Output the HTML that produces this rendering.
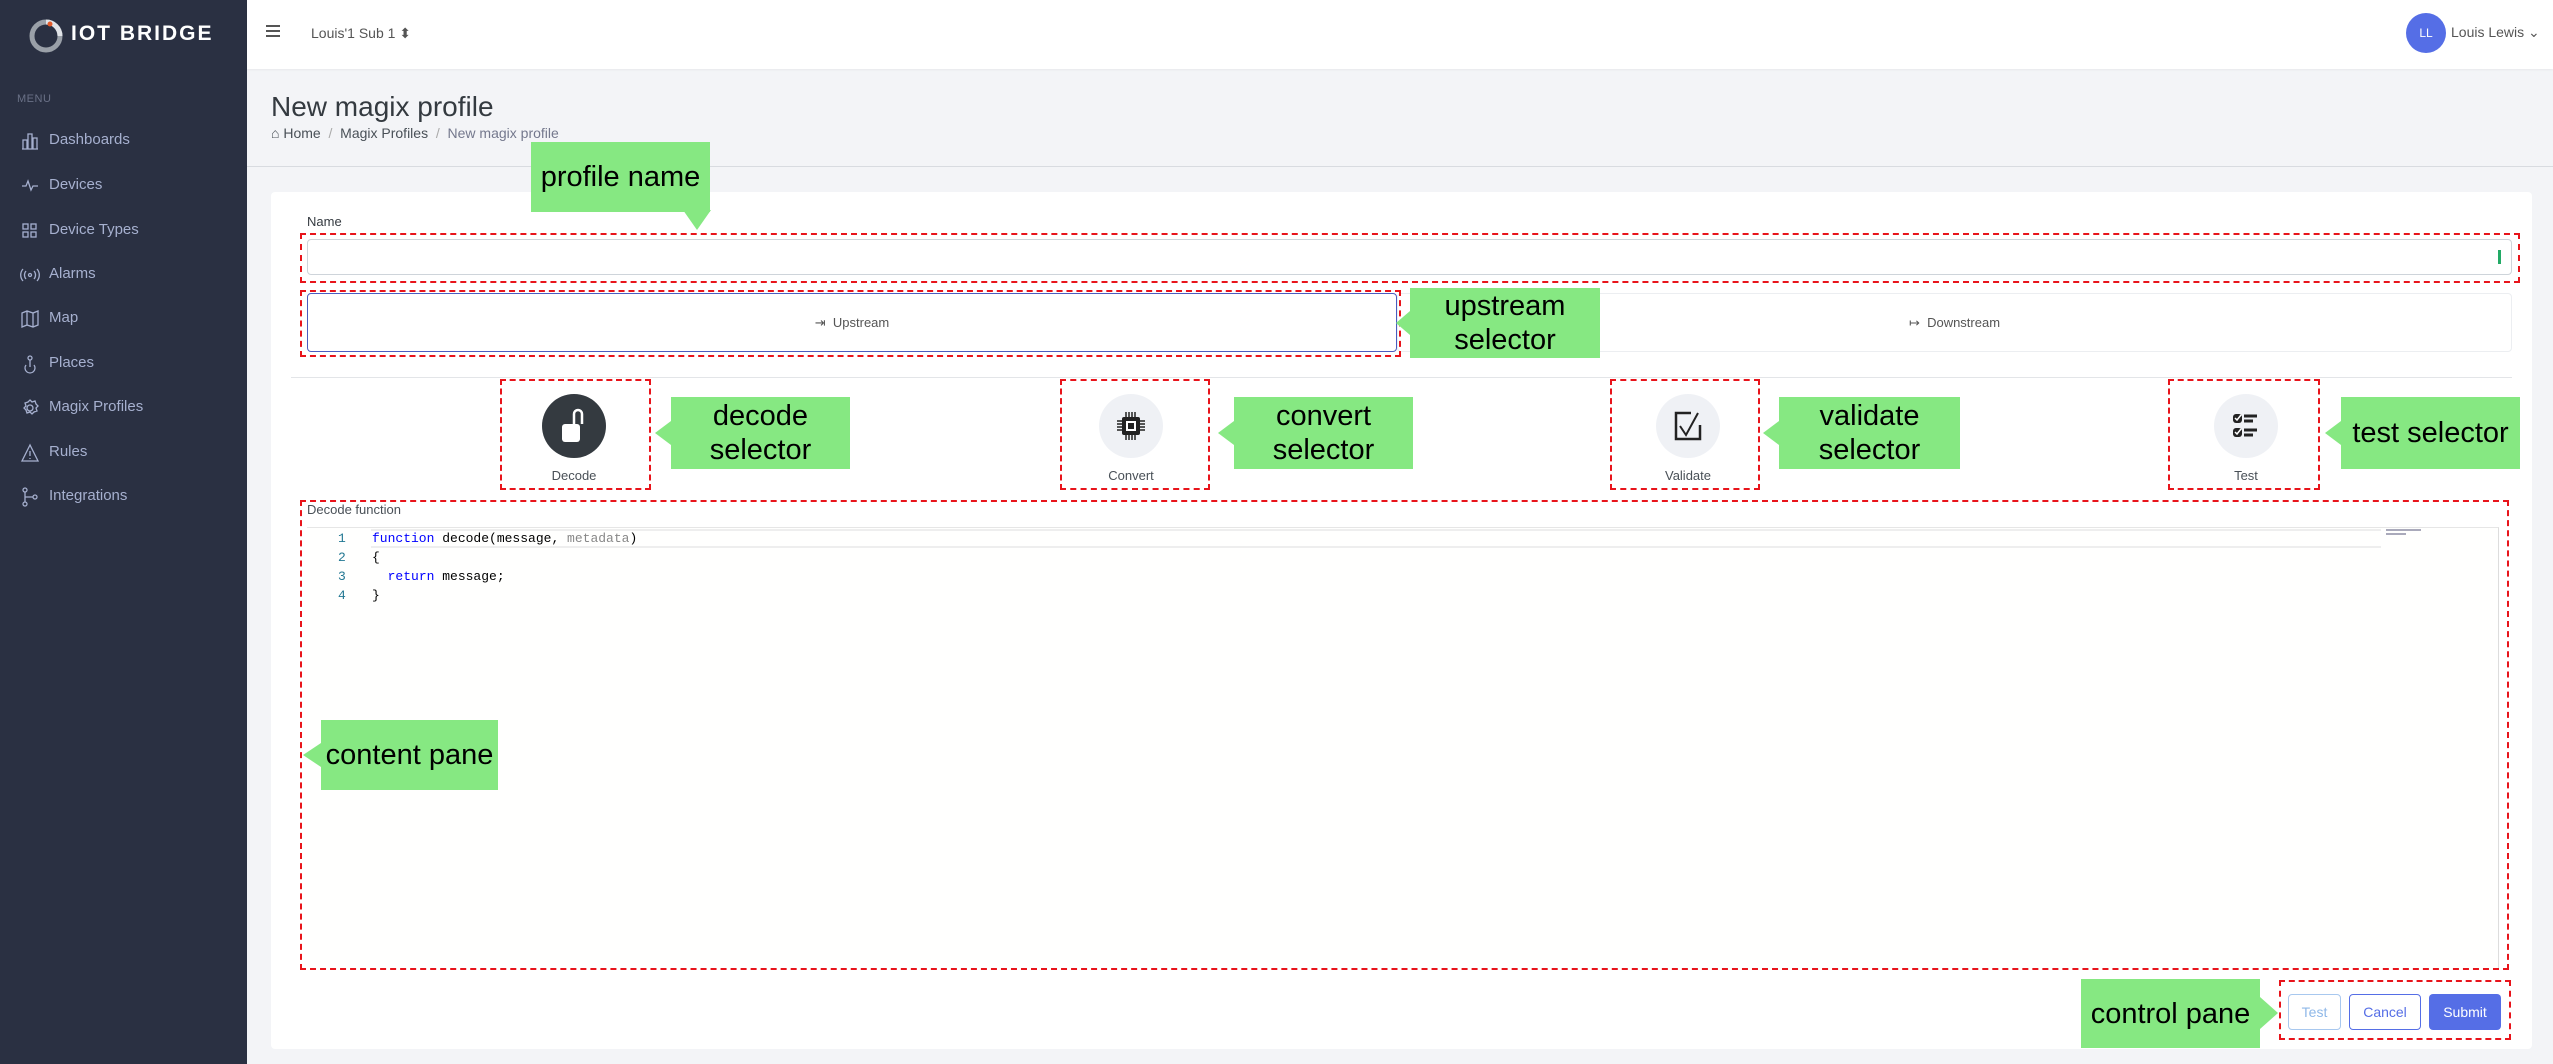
<!DOCTYPE html>
<html><head><meta charset="utf-8"><style>
*{margin:0;padding:0;box-sizing:border-box}
body{width:2553px;height:1064px;position:relative;overflow:hidden;background:#f3f4f7;font-family:"Liberation Sans",sans-serif;color:#495057}
.a{position:absolute}
#side{left:0;top:0;width:247px;height:1064px;background:#2a3042}
.nav{position:absolute;left:49px;font-size:15px;color:#a6b0cf}
.ni{position:absolute;left:20px;width:20px;height:20px}
#hdr{left:247px;top:0;width:2306px;height:69px;background:#fff;box-shadow:0 1px 2px rgba(0,0,0,.05)}
.red{position:absolute;border:2px dashed #e8141b}
.grn{position:absolute;background:#86e882;color:#000;font-family:"Liberation Sans",Arial,sans-serif;font-size:29px;text-align:center;display:flex;align-items:center;justify-content:center;line-height:34px}
.circ{position:absolute;width:64px;height:64px;border-radius:50%;background:#eff1f5;display:flex;align-items:center;justify-content:center}
.lbl{position:absolute;font-size:13px;color:#495057;width:120px;text-align:center}
.code{position:absolute;font-family:"Liberation Mono",monospace;font-size:13px;color:#000;white-space:pre}
.ln{position:absolute;left:338px;font-family:"Liberation Mono",monospace;font-size:13px;color:#237893}
.btn{position:absolute;border-radius:4px;font-size:14px;display:flex;align-items:center;justify-content:center}
</style></head><body>
<div id="side" class="a">
 <svg class="a" style="left:28px;top:18px" width="36" height="36" viewBox="0 0 36 36"><circle cx="18" cy="18" r="14" fill="none" stroke="#9aa0a8" stroke-width="5"/><path d="M18 4 A14 14 0 0 1 32 18" fill="none" stroke="#e0e3e7" stroke-width="5"/><circle cx="22" cy="6" r="2.5" fill="#e25a2a"/></svg>
 <div class="a" style="left:71px;top:22px;font-size:21px;font-weight:bold;color:#fff;letter-spacing:2px">IOT BRIDGE</div>
 <div class="a" style="left:17px;top:93px;font-size:11px;color:#6a7187;letter-spacing:.5px">MENU</div>
 <div class="nav" style="top:131px">Dashboards</div>
 <div class="nav" style="top:176px">Devices</div>
 <div class="nav" style="top:221px">Device Types</div>
 <div class="nav" style="top:265px">Alarms</div>
 <div class="nav" style="top:309px">Map</div>
 <div class="nav" style="top:354px">Places</div>
 <div class="nav" style="top:398px">Magix Profiles</div>
 <div class="nav" style="top:443px">Rules</div>
 <div class="nav" style="top:487px">Integrations</div>
 <svg class="ni" style="top:131px" viewBox="0 0 20 20" fill="none" stroke="#a6b0cf" stroke-width="1.3"><path d="M3 18V9h4v9M8 18V3h4v15M13 18V7h4v11M2 18h16"/></svg>
 <svg class="ni" style="top:176px" viewBox="0 0 20 20" fill="none" stroke="#a6b0cf" stroke-width="1.3"><path d="M2 10h4l2-5 3 9 2-4h5"/></svg>
 <svg class="ni" style="top:221px" viewBox="0 0 20 20" fill="none" stroke="#a6b0cf" stroke-width="1.3"><rect x="3" y="3" width="5" height="5"/><rect x="11" y="3" width="5" height="5"/><rect x="3" y="11" width="5" height="5"/><rect x="11" y="11" width="5" height="5"/></svg>
 <svg class="ni" style="top:265px" viewBox="0 0 20 20" fill="none" stroke="#a6b0cf" stroke-width="1.3"><circle cx="10" cy="10" r="1.5"/><path d="M6 6a6 6 0 0 0 0 8M14 6a6 6 0 0 1 0 8M3 4a9 9 0 0 0 0 12M17 4a9 9 0 0 1 0 12"/></svg>
 <svg class="ni" style="top:309px" viewBox="0 0 20 20" fill="none" stroke="#a6b0cf" stroke-width="1.3"><path d="M2 4l5-2 6 2 5-2v14l-5 2-6-2-5 2zM7 2v14M13 4v14"/></svg>
 <svg class="ni" style="top:354px" viewBox="0 0 20 20" fill="none" stroke="#a6b0cf" stroke-width="1.3"><circle cx="10" cy="4" r="2"/><path d="M10 6v7M6 11a5 5 0 1 0 8 0"/></svg>
 <svg class="ni" style="top:398px" viewBox="0 0 20 20" fill="none" stroke="#a6b0cf" stroke-width="1.3"><circle cx="10" cy="10" r="3"/><path d="M10 2l2 2 3-1 1 3 2 2-2 2 1 3-3 1-2 2-2-2-3 1-1-3-2-2 2-2-1-3 3-1z"/></svg>
 <svg class="ni" style="top:443px" viewBox="0 0 20 20" fill="none" stroke="#a6b0cf" stroke-width="1.3"><path d="M10 2L2 18h16zM10 8v5M10 15v1"/></svg>
 <svg class="ni" style="top:487px" viewBox="0 0 20 20" fill="none" stroke="#a6b0cf" stroke-width="1.3"><circle cx="5" cy="3" r="2"/><circle cx="5" cy="17" r="2"/><circle cx="15" cy="10" r="2"/><path d="M5 5v10M5 10h8"/></svg>
</div>
<div id="hdr" class="a">
 <div class="a" style="left:19px;top:25px;width:14px;height:2px;background:#555;box-shadow:0 5px 0 #555,0 10px 0 #555"></div>
 <div class="a" style="left:64px;top:25px;font-size:14px;color:#555">Louis'1 Sub 1 &#x2B0D;</div>
 <div class="a" style="left:2159px;top:13px;width:40px;height:40px;border-radius:50%;background:#556ee6;color:#fff;font-size:12px;display:flex;align-items:center;justify-content:center">LL</div>
 <div class="a" style="left:2204px;top:24px;font-size:14px;color:#555">Louis Lewis &#x2304;</div>
</div>
<div class="a" style="left:271px;top:91px;font-size:28px;color:#343a40">New magix profile</div>
<div class="a" style="left:271px;top:125px;font-size:14px;color:#495057">&#8962; Home &nbsp;<span style="color:#aaa">/</span>&nbsp; Magix Profiles &nbsp;<span style="color:#aaa">/</span>&nbsp; <span style="color:#74788d">New magix profile</span></div>
<div class="a" style="left:247px;top:166px;width:2306px;height:1px;background:#d8dbe0"></div>
<div class="a" style="left:271px;top:192px;width:2261px;height:857px;background:#fff;border-radius:4px"></div>
<div class="a" style="left:307px;top:214px;font-size:13px;color:#343a40">Name</div>
<div class="a" style="left:307px;top:239px;width:2205px;height:36px;border:1px solid #ced4da;border-radius:4px;background:#fff"></div>
<div class="a" style="left:2498px;top:250px;width:3px;height:14px;background:#2a6"></div>
<div class="a" style="left:307px;top:293px;width:1090px;height:59px;border:1px solid #4a5cc0;border-radius:4px;display:flex;align-items:center;justify-content:center;font-size:13px;color:#555">&#x21E5;&nbsp; Upstream</div>
<div class="a" style="left:1397px;top:293px;width:1115px;height:59px;border:1px solid #eceef1;border-radius:4px;display:flex;align-items:center;justify-content:center;font-size:13px;color:#555">&#x21A6;&nbsp; Downstream</div>
<div class="a" style="left:291px;top:377px;width:2221px;height:1px;background:#e3e5e8"></div>
<div class="circ" style="left:542px;top:394px;background:#343a40"><svg width="32" height="40" viewBox="0 0 32 40"><rect x="4" y="18" width="18" height="18" rx="3" fill="#fff"/><path d="M16 18V8a4 4 0 0 1 8 0v10" fill="none" stroke="#fff" stroke-width="2.5"/></svg></div>
<div class="circ" style="left:1099px;top:394px"><svg width="34" height="34" viewBox="0 0 34 34"><rect x="8" y="8" width="18" height="18" rx="2" fill="#222"/><rect x="12" y="12" width="10" height="10" fill="#fff"/><rect x="14" y="14" width="6" height="6" fill="#222"/><path d="M12 3v5M15 3v5M18 3v5M21 3v5M12 26v5M15 26v5M18 26v5M21 26v5M3 12h5M3 15h5M3 18h5M3 21h5M26 12h5M26 15h5M26 18h5M26 21h5" stroke="#222" stroke-width="1.5"/></svg></div>
<div class="circ" style="left:1656px;top:394px"><svg width="34" height="34" viewBox="0 0 34 34"><path d="M20 4H5v26h24V16" fill="none" stroke="#222" stroke-width="2.5"/><path d="M9 17l6 9 12-22" fill="none" stroke="#222" stroke-width="2"/></svg></div>
<div class="circ" style="left:2214px;top:394px"><svg width="34" height="34" viewBox="0 0 34 34"><rect x="4" y="5" width="9" height="9" rx="3" fill="#222"/><rect x="4" y="19" width="9" height="9" rx="3" fill="#222"/><path d="M6 9l2 2 4-5M6 23l2 2 4-5" stroke="#fff" stroke-width="1.5" fill="none"/><path d="M15 7h13M15 12h9M15 21h13M15 26h9" stroke="#222" stroke-width="3"/></svg></div>
<div class="lbl" style="left:514px;top:468px">Decode</div>
<div class="lbl" style="left:1071px;top:468px">Convert</div>
<div class="lbl" style="left:1628px;top:468px">Validate</div>
<div class="lbl" style="left:2186px;top:468px">Test</div>
<div class="a" style="left:307px;top:502px;font-size:13px;color:#495057">Decode function</div>
<div class="a" style="left:307px;top:527px;width:2192px;height:443px;border-top:1px solid #e6e6e6;border-right:1px solid #ddd;background:#fffffe"></div>
<div class="a" style="left:371px;top:529px;width:2010px;height:19px;border:2px solid #eee;border-left:none;border-right:none"></div>
<div class="ln" style="top:531px">1</div><div class="ln" style="top:550px">2</div><div class="ln" style="top:569px">3</div><div class="ln" style="top:588px">4</div>
<div class="code" style="left:372px;top:531px"><span style="color:#0000ff">function</span> decode(message, <span style="color:#888">metadata</span>)</div>
<div class="code" style="left:372px;top:550px">{</div>
<div class="code" style="left:372px;top:569px">  <span style="color:#0000ff">return</span> message;</div>
<div class="code" style="left:372px;top:588px">}</div>
<div class="a" style="left:2386px;top:529px;width:35px;height:2px;background:#aab"></div>
<div class="a" style="left:2386px;top:533px;width:20px;height:2px;background:#aab"></div>
<div class="btn" style="left:2288px;top:994px;width:53px;height:36px;border:1px solid #a8c8ef;color:#8fb8e8">Test</div>
<div class="btn" style="left:2349px;top:994px;width:72px;height:36px;border:1px solid #556ee6;color:#556ee6">Cancel</div>
<div class="btn" style="left:2429px;top:994px;width:72px;height:36px;background:#556ee6;color:#fff">Submit</div>
<div class="red" style="left:300px;top:233px;width:2220px;height:50px"></div>
<div class="red" style="left:300px;top:290px;width:1101px;height:67px"></div>
<div class="red" style="left:500px;top:379px;width:151px;height:111px"></div>
<div class="red" style="left:1060px;top:379px;width:150px;height:111px"></div>
<div class="red" style="left:1610px;top:379px;width:150px;height:111px"></div>
<div class="red" style="left:2168px;top:379px;width:152px;height:111px"></div>
<div class="red" style="left:300px;top:500px;width:2209px;height:470px"></div>
<div class="red" style="left:2279px;top:980px;width:232px;height:60px"></div>
<div class="grn" style="left:531px;top:142px;width:179px;height:70px">profile name</div>
<div class="a" style="left:683px;top:210px;width:0;height:0;border-left:14px solid transparent;border-right:14px solid transparent;border-top:20px solid #86e882"></div>
<div class="grn" style="left:1410px;top:288px;width:190px;height:70px">upstream<br>selector</div>
<div class="grn" style="left:671px;top:397px;width:179px;height:72px">decode<br>selector</div>
<div class="grn" style="left:1234px;top:397px;width:179px;height:72px">convert<br>selector</div>
<div class="grn" style="left:1779px;top:397px;width:181px;height:72px">validate<br>selector</div>
<div class="grn" style="left:2341px;top:397px;width:179px;height:72px">test selector</div>
<div class="grn" style="left:321px;top:720px;width:177px;height:70px">content pane</div>
<div class="grn" style="left:2081px;top:979px;width:179px;height:69px">control pane</div>
<div class="a" style="left:1396px;top:311px;border-top:12px solid transparent;border-bottom:12px solid transparent;border-right:14px solid #86e882"></div>
<div class="a" style="left:655px;top:421px;border-top:12px solid transparent;border-bottom:12px solid transparent;border-right:16px solid #86e882"></div>
<div class="a" style="left:1218px;top:421px;border-top:12px solid transparent;border-bottom:12px solid transparent;border-right:16px solid #86e882"></div>
<div class="a" style="left:1763px;top:421px;border-top:12px solid transparent;border-bottom:12px solid transparent;border-right:16px solid #86e882"></div>
<div class="a" style="left:2325px;top:421px;border-top:12px solid transparent;border-bottom:12px solid transparent;border-right:16px solid #86e882"></div>
<div class="a" style="left:303px;top:743px;border-top:12px solid transparent;border-bottom:12px solid transparent;border-right:18px solid #86e882"></div>
<div class="a" style="left:2260px;top:997px;border-top:16px solid transparent;border-bottom:16px solid transparent;border-left:18px solid #86e882"></div>
</body></html>
